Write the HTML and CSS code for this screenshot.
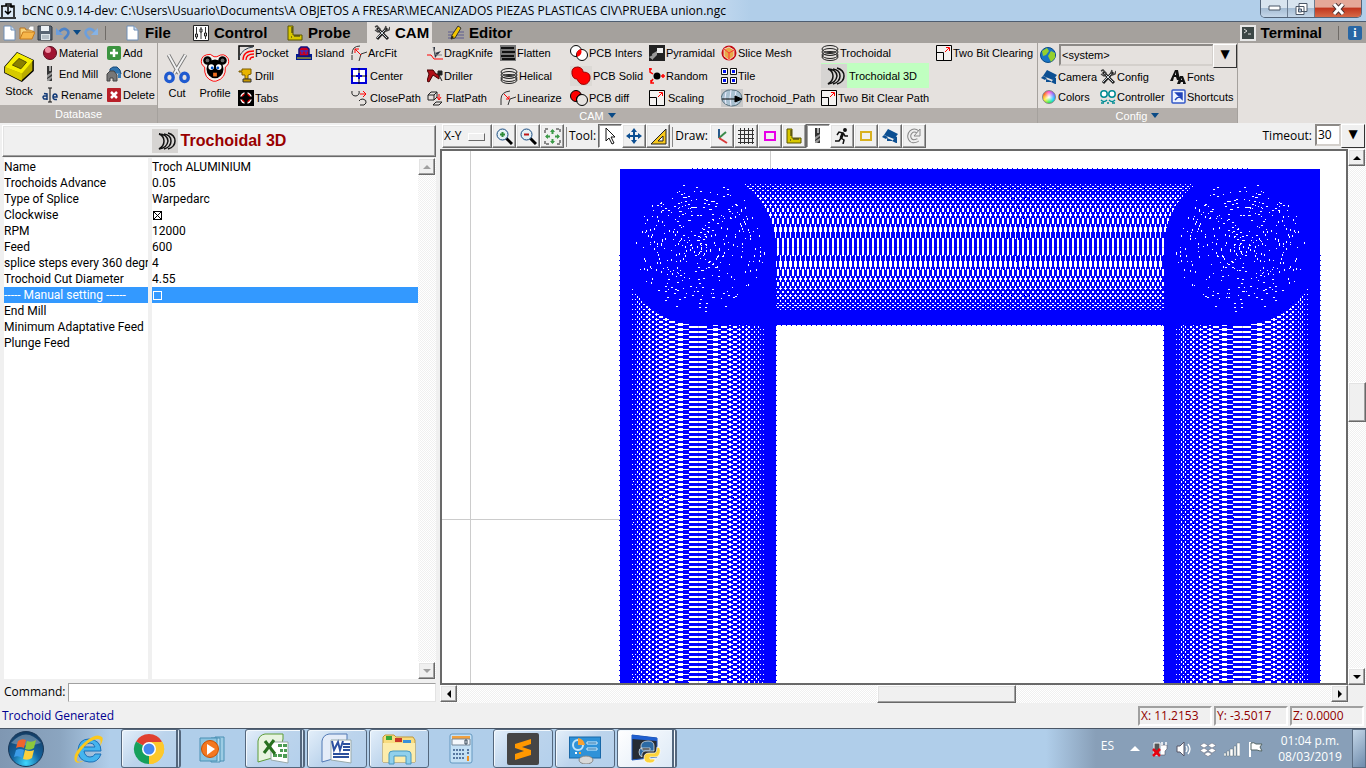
FILE: index.html
```html
<!DOCTYPE html>
<html lang="en">
<head>
  <meta charset="UTF-8" />
  <meta name="viewport" content="width=device-width, initial-scale=1.0"/>
  <title>bCNC 0.9.14-dev</title>
  <link rel="stylesheet" href="styles.css">
</head>
<body>
  <!-- Shared icons -->
  <svg class="sprite" aria-hidden="true">
    <symbol id="i-page" viewBox="0 0 16 16"><path d="M3 1h7l4 4v10H3z" fill="#fff" stroke="#6f8fb8"/><path d="M10 1v4h4" fill="#cfe0f3" stroke="#6f8fb8"/></symbol>
    <symbol id="i-endmill" viewBox="0 0 16 16"><path d="M5 0h5v15H5z" fill="#333"/><path d="M7 0h2v5H7z" fill="#aaa"/><path d="M5 9l5-3v2l-5 4zM5 13l5-3v2l-3 3H5z" fill="#999"/></symbol>
    <symbol id="i-ruler" viewBox="0 0 16 16"><path d="M1 1h5v9h9v5H1z" fill="#d8c800" stroke="#5b5400"/><path d="M4 3h2M4 5h2M4 7h2M8 12v-2M10 12v-2M12 12v-2M4 12h1" stroke="#222"/></symbol>
    <symbol id="i-camera" viewBox="0 0 16 16"><path d="M6 1l10 5-4 5L2 7z" fill="#0c4f92"/><path d="M2 7l-2 2 4 2 2-2zM5 10l5 2v1H5zM13 8l2 1v6h-1l-4-2 2-2z" fill="#0c4f92"/></symbol>
    <symbol id="i-scale" viewBox="0 0 16 16"><path d="M.5.5h15v15H.5zM.5 7.500h7v8" fill="#f4f2f0" stroke="#000"/><path d="M9 7l4-4M10 2.500h3.500V6" fill="none" stroke="#f00"/></symbol>
    <symbol id="i-coil" viewBox="0 0 18 16"><g fill="none" stroke="#222"><ellipse cx="9" cy="4" rx="8" ry="3.500"/><ellipse cx="9" cy="7" rx="8" ry="3.500"/><ellipse cx="9" cy="10" rx="8" ry="3.500"/><ellipse cx="9" cy="12" rx="8" ry="3.500"/></g></symbol>
    <symbol id="i-troch3d" viewBox="0 0 26 24"><path d="M0 0h26v24H0z" fill="#d6d4d2"/><g fill="none" stroke="#111" stroke-width="1.500"><path d="M7 5q8 0 9 7-1 7-9 8 5-3 5-8T7 5"/><path d="M12 5q7 1 7 7t-7 8M16 4q7 2 7 8t-7 8"/></g></symbol>
    <symbol id="i-lens" viewBox="0 0 17 17"><path d="M10 10l6 6" stroke="#000" stroke-width="3"/><circle cx="6.500" cy="6.500" r="5.500" fill="#e5f1f5" stroke="#174a80"/></symbol>
    <symbol id="i-down" viewBox="0 0 8 5"><path d="M0 0h8L4 5z" fill="#0a4a86"/></symbol>
    <symbol id="i-wrench" viewBox="0 0 16 16"><path d="M3 3l11 11" stroke="#222" stroke-width="3"/><path d="M13 3L3 14" stroke="#222" stroke-width="3"/><path d="M4 4l9 9M12 4l-9 9" stroke="#cdd6dd"/><path d="M1 2l2-1 3 3-2 3-3-2M12 1l-1 3 1 2 3-1 1-3" fill="none" stroke="#444" stroke-width="1.500"/></symbol>
  </svg>

  <header class="titlebar">
    <svg class="app-icon" viewBox="0 0 16 16"><path d="M2 14V3h12v11M0 15h16M1 3h5V1h5v3h2M8 4v6M5 8l3 3 3-3" fill="none" stroke="#000" stroke-width="1.500"/></svg>
    <h1 class="title">bCNC 0.9.14-dev: C:\Users\Usuario\Documents\A OBJETOS A FRESAR\MECANIZADOS PIEZAS PLASTICAS CIV\PRUEBA union.ngc</h1>
    <div class="win-buttons">
      <button class="win-btn" aria-label="Minimize"><svg width="13" height="7"><path d="M1 1h11v4H1z" fill="#fff" stroke="#4b5666"/></svg></button>
      <button class="win-btn" aria-label="Restore"><svg width="13" height="12"><path d="M4 .5h8v8H4zM1 3.500h8v8H1z" fill="#fff" stroke="#4b5666"/><path d="M3.500 6h3v3h-3z" fill="#a9bfd6" stroke="#4b5666"/></svg></button>
      <button class="win-btn win-close" aria-label="Close"><svg width="13" height="12"><path d="M2 1l9 10M11 1L2 11" stroke="#4e3434" stroke-width="5"/><path d="M2 1l9 10M11 1L2 11" stroke="#fff" stroke-width="3"/></svg></button>
    </div>
  </header>

  <nav class="tabs">
    <div class="quick">
      <button aria-label="New"><svg class="icon"><use href="#i-page"/></svg></button>
      <button aria-label="Open"><svg class="icon" viewBox="0 0 16 16"><path d="M1 14V3h5l1 2h7v3" fill="#f8d27a" stroke="#b8701c"/><path d="M9 4l2-3h4v5" fill="#fff" stroke="#999"/><path d="M1 14l3-7h12l-3 7z" fill="#f6b64a" stroke="#c57a1c"/></svg></button>
      <button aria-label="Save"><svg class="icon" viewBox="0 0 16 16"><path d="M1 1h13l1 1v13H1z" fill="#596473" stroke="#303943"/><path d="M4 1h8v5H4z" fill="#eef2f6"/><path d="M4 9h9v6H4z" fill="#dfe5ea"/><path d="M5 11h7M5 13h7" stroke="#8c98a4"/></svg></button>
      <button aria-label="Undo"><svg class="icon" viewBox="0 0 16 16"><path d="M4 7q4-5 8-2t-3 9" fill="none" stroke="#4c82c8" stroke-width="2.500"/><path d="M1 3v7h7z" fill="#6d9edc"/></svg></button>
      <button aria-label="Undo list"><svg width="8" height="5"><use href="#i-down"/></svg></button>
      <button aria-label="Redo"><svg class="icon" viewBox="0 0 16 16"><path d="M12 7Q8 2 4 5t3 9" fill="none" stroke="#6c9fdd" stroke-width="2.500"/><path d="M15 3v7H8z" fill="#86b3e6"/></svg></button>
      <span class="divider"></span>
    </div>
    <a href="#" class="tab tab-file"><svg class="icon"><use href="#i-page"/></svg>File</a>
    <a href="#" class="tab tab-control"><svg class="icon" viewBox="0 0 16 16"><path d="M.5.500h15v15H.5z" fill="#fff" stroke="#222"/><path d="M3.500 2v12M8 2v12M12.500 2v12" stroke="#333"/><path d="M2.500 9h2v3h-2zM7 4h2v3H7zM11.500 8h2v3h-2z" fill="#ccc" stroke="#222"/></svg>Control</a>
    <a href="#" class="tab tab-probe"><svg class="icon"><use href="#i-ruler"/></svg>Probe</a>
    <a href="#" class="tab tab-cam active"><svg class="icon"><use href="#i-wrench"/></svg>CAM</a>
    <a href="#" class="tab tab-editor"><svg class="icon" viewBox="0 0 16 16"><path d="M0 7h16M0 10h16M0 13h16" stroke="#5c5c90"/><path d="M10 1l3 2-6 10-4 1 1-4z" fill="#f2c500" stroke="#333"/><path d="M3 14l1-3 2 1z" fill="#111"/></svg>Editor</a>
    <a href="#" class="tab tab-terminal"><svg class="icon" viewBox="0 0 16 16"><path d="M1 1h14v14H1z" fill="#3c4746" stroke="#e8e8e8" stroke-width="2"/><path d="M4 4l3 2-3 2M8 9h3" fill="none" stroke="#ddd"/></svg>Terminal</a>
    <span class="divider"></span>
    <button class="info" aria-label="About">i</button>
  </nav>

  <section class="ribbon">
    <div class="group group-db">
      <div class="group-body">
        <button class="big"><svg class="icon-big" viewBox="0 0 34 34"><path d="M2 18L15 3l17 8v11L20 33 2 24z" fill="#b9ab00" stroke="#000" stroke-width="1.500"/><path d="M2 18L15 3l17 8-12 14z" fill="#f6ee00"/><path d="M10 16l7-7 8 4-6 7z" fill="#8a8000" stroke="#4c4700"/><path d="M20 25v8L2 24v-6z" fill="#d6ca00"/></svg>Stock</button>
        <div class="db-grid">
          <button class="tool"><svg class="icon" viewBox="0 0 16 16"><circle cx="8" cy="8" r="6.500" fill="#a01432" stroke="#5c0c1e"/><circle cx="6" cy="5" r="3" fill="#f08ca0"/></svg>Material</button>
          <button class="tool"><svg class="icon" viewBox="0 0 16 16"><rect x="1" y="1" width="14" height="14" rx="2" fill="#3c9440"/><path d="M8 4v8M4 8h8" stroke="#fff" stroke-width="2.500"/></svg>Add</button>
          <button class="tool"><svg class="icon"><use href="#i-endmill"/></svg>End Mill</button>
          <button class="tool"><svg class="icon" viewBox="0 0 16 16"><path d="M4 7V3l3-2h4l3 3 1 4" fill="#2f73ae" stroke="#174a7a"/><path d="M1 14V8l3-3h4l3 4v6H7v-3H4v3H1z" fill="#777" stroke="#444"/><path d="M12 8h3v4h-3z" fill="#3a80bb"/></svg>Clone</button>
          <button class="tool roomy"><svg class="icon" viewBox="0 0 16 16"><path d="M5 12H2q-2-2 0-3h3v4M5 13V7L2 6.500M11 10h4q0-3-2-3t-2 3q0 3 4 2.500" fill="none" stroke="#123a78" stroke-width="1.500"/><path d="M6 1h4M8 1v14M6 15h4" stroke="#111"/></svg>Rename</button>
          <button class="tool"><svg class="icon" viewBox="0 0 16 16"><rect x="1" y="1" width="14" height="14" rx="1" fill="#b81f28"/><path d="M5 5l6 6M11 5l-6 6" stroke="#fff" stroke-width="2.500"/></svg>Delete</button>
        </div>
      </div>
      <div class="group-label">Database</div>
    </div>

    <div class="group group-cam">
      <div class="group-body">
        <button class="big"><svg class="icon-big" viewBox="0 0 34 34"><path d="M8 3l11 20M26 3L14 23" stroke="#777" stroke-width="4"/><path d="M8 3l11 20M26 3L14 23" stroke="#f2f2f2" stroke-width="2"/><g fill="none" stroke="#1f5ad0" stroke-width="3.500"><ellipse cx="9" cy="27" rx="4" ry="4.500"/><ellipse cx="25" cy="27" rx="4" ry="4.500"/></g></svg>Cut</button>
        <button class="big"><svg class="icon-big" viewBox="0 0 34 34"><path d="M8 3q4-2 8 2h3q8-5 12 2 2 6-3 9 1 12-10 15h-3Q5 28 6 16q-5-3-3-9 1-3 5-4z" fill="#f3efec" stroke="#f00"/><circle cx="9" cy="9" r="4.500"/><circle cx="25" cy="9" r="4.500"/><circle cx="9" cy="9" r="2" fill="#666"/><circle cx="25" cy="9" r="2" fill="#666"/><ellipse cx="17" cy="18" rx="9" ry="10"/><circle cx="13" cy="16" r="3" fill="#fff"/><circle cx="21" cy="16" r="3" fill="#fff"/><circle cx="14" cy="17" r="1.500" fill="#05c"/><circle cx="20" cy="17" r="1.500" fill="#05c"/><path d="M15 22h4v4h-4z" fill="#f07020"/></svg>Profile</button>
        <div class="cam-grid">
          <button class="tool"><svg class="icon" viewBox="0 0 16 16"><path d="M1 15V1h15" fill="none" stroke="#000" stroke-width="1.500"/><path d="M1 12Q5 3 15 2" fill="none" stroke="#345"/><path d="M5 15q0-9 11-9M8 15q0-6 8-6M12 15q0-3 4-3" fill="none" stroke="#f00" stroke-width="1.300"/></svg>Pocket</button>
          <button class="tool"><svg class="icon" viewBox="0 0 16 16"><path d="M1 3h3V1h9v5l-3 1v4H7V7H4V4H1z" fill="#e8b400" stroke="#7a5b00"/><path d="M5 11h8v3H5z" fill="#c89800" stroke="#333"/></svg>Drill</button>
          <button class="tool"><svg class="icon" viewBox="0 0 16 16"><path d="M0 0h16v16H0z"/><circle cx="8" cy="8" r="6" fill="#fff"/><circle cx="8" cy="8" r="4" fill="#000" stroke="#e00" stroke-width="1.500"/><path d="M8 1v4M8 11v4M1 8h4M11 8h4" stroke="#000" stroke-width="3"/></svg>Tabs</button>
          <button class="tool roomy"><svg class="icon" viewBox="0 0 16 16"><path d="M0 9h16v6H0z" fill="#001a90"/><path d="M3 11V4l2-2h6l2 2v7z" fill="#c80020" stroke="#101080" stroke-width="1.500"/><path d="M6 5v4M10 5v4M4 6h8" stroke="#2038e0"/><path d="M1 13h14" stroke="#e0d000"/></svg>Island</button>
          <i></i><i></i>
          <button class="tool"><svg class="icon" viewBox="0 0 16 16"><path d="M1 15V10M16 7l-6 2-2 7M1 9q0-8 8-8" fill="none" stroke="#333"/><path d="M10 10L4 4M4 8V4h4" fill="none" stroke="#f00"/></svg>ArcFit</button>
          <button class="tool roomy"><svg class="icon" viewBox="0 0 16 16"><path d="M1 1h14v14H1z" fill="#fff" stroke="#0000d8" stroke-width="2"/><path d="M0 8h16M8 0v16" stroke="#000"/><path d="M5 8h6M8 5v6" stroke="#0000d8" stroke-width="2"/></svg>Center</button>
          <button class="tool roomy"><svg class="icon" viewBox="0 0 16 16"><path d="M1 1q-1 5 4 5 4-1 3-5M8 11q1-2 4-2 4 1 3 4t-6 2" fill="none" stroke="#222"/><path d="M9 4h6M12 7l3-3-3-3" fill="none" stroke="#f00"/></svg>ClosePath</button>
          <button class="tool"><svg class="icon" viewBox="0 0 16 16"><path d="M0 10h4l3 4h9" fill="none" stroke="#f00"/><path d="M6 2h2v6l6-2-6 7z" fill="#2c3340"/><path d="M6 2l3 8h6" fill="none" stroke="#888"/></svg>DragKnife</button>
          <button class="tool"><svg class="icon" viewBox="0 0 16 16"><path d="M0 2h6l3 4h3v5l-3-2-3-2-4 7-2-1 2-7z" fill="#b01018" stroke="#400"/><path d="M11 3h4v4h-4zM12 7l3 6" fill="#222" stroke="#222"/></svg>Driller</button>
          <button class="tool roomy"><svg class="icon" viewBox="0 0 16 16"><path d="M1 5l3-3h6v5l-3 3H1zM1 5h6v5M7 5l3-3M6 15l3-3h6l-3 3z" fill="none" stroke="#222"/><path d="M12 4v5M10 7l2 3 2-3" fill="none" stroke="#f00"/></svg>FlatPath</button>
          <button class="tool"><svg class="icon" viewBox="0 0 16 16"><path d="M0 0h16v16H0z" fill="#777"/><path d="M1 3h13M2 7h13M1 11h13M2 14h13" stroke="#111" stroke-width="2"/></svg>Flatten</button>
          <button class="tool"><svg class="icon wide"><use href="#i-coil"/></svg>Helical</button>
          <button class="tool"><svg class="icon" viewBox="0 0 16 16"><path d="M1 15V9q0-7 9-8M16 7l-6 2-2 6" fill="none" stroke="#333"/><path d="M4 4l5 5M9 6v3H6" fill="none" stroke="#f00"/></svg>Linearize</button>
          <button class="tool"><svg class="icon wide" viewBox="0 0 18 16"><circle cx="6" cy="6" r="5.500" fill="#fff" stroke="#000"/><circle cx="12" cy="10" r="5.500" fill="#fff" stroke="#000"/><path d="M7 12Q5 6 11 4q2 6-4 8z" fill="#f00"/></svg>PCB Inters</button>
          <button class="tool"><svg class="icon x-wide" viewBox="0 0 22 20"><path d="M0 0h22v20H0z" fill="#dcd9d5"/><path d="M2 8q-1-7 6-7 5 1 5 5 8 0 7 7-2 7-9 5-3-2-4-5-4 0-5-5z" fill="#f00" stroke="#900"/></svg>PCB Solid</button>
          <button class="tool"><svg class="icon wide" viewBox="0 0 18 16"><circle cx="6" cy="6" r="5.500" fill="#f00" stroke="#000"/><circle cx="12" cy="10" r="5.500" fill="#e8e4e1" stroke="#000"/><path d="M7 12Q5 6 11 4" fill="none" stroke="#000"/></svg>PCB diff</button>
          <button class="tool"><svg class="icon" viewBox="0 0 16 16"><path d="M0 0h16v16H0z" fill="#222"/><path d="M8 3h6v5H8z" fill="#eee"/><path d="M3 9l5-3v4l-4 4zM0 12l4-2v5z" fill="#999"/></svg>Pyramidal</button>
          <button class="tool"><svg class="icon" viewBox="0 0 16 16"><circle cx="8" cy="8" r="3.500"/><path d="M0 1h3M1 0v4l3 2M12 8h4M14 6v4M2 12v3h3M4 11l-2 3" fill="none" stroke="#f00" stroke-width="1.500"/></svg>Random</button>
          <button class="tool roomy"><svg class="icon"><use href="#i-scale"/></svg>Scaling</button>
          <button class="tool"><svg class="icon" viewBox="0 0 16 16"><circle cx="8" cy="8" r="7.500" fill="#c40c10"/><path d="M3 4l5-2 5 3v6l-5 4-5-4z" fill="#e8a848" stroke="#fff" stroke-width=".7"/><path d="M3 4l5 4 5-3M8 8v7" stroke="#f33" fill="none"/></svg>Slice Mesh</button>
          <button class="tool"><svg class="icon" viewBox="0 0 16 16"><path d="M.5.500h6v6h-6zM9.500.500h6v6h-6zM.5 9.500h6v6h-6zM9.500 9.500h6v6h-6z" fill="#fff" stroke="#111"/><path d="M2 2h3v3H2zM11 2h3v3h-3zM2 11h3v3H2zM11 11h3v3h-3z" fill="#0010f0"/></svg>Tile</button>
          <button class="tool"><svg class="icon x-wide" viewBox="0 0 22 18"><path d="M0 0h22v18H0z" fill="#c9c9c9"/><path d="M0 9Q2 0 11 1q9 0 10 8-2 8-10 8T0 9" fill="#a8c0d0" stroke="#58707e"/><path d="M5 3q-2 6 0 12M10 1q-2 8 0 16M15 2q-2 7 0 13" fill="none" stroke="#eef"/><path d="M1 10h14M14 7l7 3-7 3z" stroke="#000"/></svg>Trochoid_Path</button>
          <button class="tool"><svg class="icon wide"><use href="#i-coil"/></svg>Trochoidal</button>
          <button class="tool selected"><svg class="icon-troch"><use href="#i-troch3d"/></svg>Trochoidal 3D</button>
          <button class="tool"><svg class="icon"><use href="#i-scale"/></svg>Two Bit Clear Path</button>
          <button class="tool"><svg class="icon"><use href="#i-scale"/></svg>Two Bit Clearing</button>
        </div>
      </div>
      <div class="group-label">CAM <svg width="8" height="5"><use href="#i-down"/></svg></div>
    </div>

    <div class="group group-config">
      <div class="group-body config-body">
        <div class="lang">
          <svg class="icon" viewBox="0 0 16 16"><circle cx="8" cy="8" r="7.500" fill="#1874c4" stroke="#0a4a86"/><path d="M2 4l5-3 2 3-3 4-3 1zM8 9l3-5 4 2v5l-4 4z" fill="#96d02c"/></svg>
          <span class="combo"><select aria-label="Language"><option>&lt;system&gt;</option></select></span>
        </div>
        <div class="config-grid">
          <button class="tool"><svg class="icon"><use href="#i-camera"/></svg>Camera</button>
          <button class="tool"><svg class="icon"><use href="#i-wrench"/></svg>Config</button>
          <button class="tool"><svg class="icon" viewBox="0 0 16 16"><path d="M0 12L5 1h3l2 10H7L6 8H4l-1 4zM7 15l3-8h3l3 8h-3v-2h-2l-1 2z" fill="#111"/><path d="M5 6l1-3v3zM11 11l1-2v2z" fill="#fff"/></svg>Fonts</button>
          <button class="tool"><span class="wheel"></span>Colors</button>
          <button class="tool"><svg class="icon" viewBox="0 0 16 16"><g fill="#fff" stroke="#008c94" stroke-width="1.500"><circle cx="4" cy="5" r="3.200"/><circle cx="12" cy="5" r="3.200"/><path d="M1 11q3 3 6 0M9 11q3 3 6 0M1 14h3M7 14h2M12 14h3"/></g></svg>Controller</button>
          <button class="tool"><svg class="icon" viewBox="0 0 16 16"><rect x="2" y="1" width="13" height="13" rx="1" fill="#eef4ff" stroke="#3458c8" stroke-width="1.500"/><path d="M5 11l5-5M6 4h6v6z" fill="#2244b8" stroke="#2244b8" stroke-width="1.500"/></svg>Shortcuts</button>
        </div>
      </div>
      <div class="group-label">Config <svg width="8" height="5"><use href="#i-down"/></svg></div>
    </div>
  </section>

  <main>
    <aside>
      <button class="panel-title raised"><svg class="icon-troch"><use href="#i-troch3d"/></svg>Trochoidal 3D</button>
      <div class="list">
        <div class="list-body">
          <table class="props">
            <tr><th>Name</th><td>Troch ALUMINIUM</td></tr>
            <tr><th>Trochoids Advance</th><td>0.05</td></tr>
            <tr><th>Type of Splice</th><td>Warpedarc</td></tr>
            <tr><th><label for="clockwise">Clockwise</label></th><td><input type="checkbox" id="clockwise" checked></td></tr>
            <tr><th>RPM</th><td>12000</td></tr>
            <tr><th>Feed</th><td>600</td></tr>
            <tr><th>splice steps every 360 degre</th><td>4</td></tr>
            <tr><th>Trochoid Cut Diameter</th><td>4.55</td></tr>
            <tr class="current"><th><label for="manual">----- Manual setting ------</label></th><td><input type="checkbox" id="manual"></td></tr>
            <tr><th>End Mill</th><td></td></tr>
            <tr><th>Minimum Adaptative Feed</th><td></td></tr>
            <tr><th>Plunge Feed</th><td></td></tr>
          </table>
        </div>
        <div class="scroll scroll-v off">
          <button class="raised" aria-label="Up"><svg width="8" height="4"><path d="M0 4h8L4 0z"/></svg></button>
          <span class="track"></span>
          <button class="raised" aria-label="Down"><svg width="8" height="4"><path d="M0 0h8L4 4z"/></svg></button>
        </div>
      </div>
      <div class="command">
        <label for="command">Command:</label>
        <input type="text" id="command">
      </div>
    </aside>

    <section class="viewer">
      <div class="toolbar">
        <span class="view-select raised"><select aria-label="View"><option>X-Y</option></select></span>
        <button class="tb raised" aria-label="Zoom in"><svg width="17" height="17"><use href="#i-lens"/><path d="M6.500 4v5M4 6.500h5" stroke="#2e8b38" stroke-width="2"/></svg></button>
        <button class="tb raised" aria-label="Zoom out"><svg width="17" height="17"><use href="#i-lens"/><path d="M4 6.500h5" stroke="#c01818" stroke-width="2"/></svg></button>
        <button class="tb raised" aria-label="Fit"><svg width="17" height="17" fill="none"><path d="M1 5V1h4M12 1h4v4M16 12v4h-4M5 16H1v-4" stroke="#222" stroke-dasharray="3 1"/><path d="M8.500 2v4M8.500 11v4M2 8.500h4M11 8.500h4" stroke="#3c9a48" stroke-width="2"/><path d="M6 4l2.500-3L11 4M6 13l2.500 3 2.500-3M4 6L1 8.500 4 11M13 6l3 2.500-3 2.500" fill="#3c9a48"/></svg></button>
        <span class="tb-label">Tool:</span>
        <button class="tb sunken" aria-label="Select"><svg width="16" height="18"><path d="M4 1v13l3-3 3 6 2-1-3-6h4z" fill="#fff" stroke="#111"/></svg></button>
        <button class="tb raised" aria-label="Pan"><svg width="16" height="16"><path d="M8 2v12M2 8h12" stroke="#0c4f92" stroke-width="2"/><path d="M5 4l3-4 3 4zM5 12l3 4 3-4zM4 5L0 8l4 3zM12 5l4 3-4 3z" fill="#0c4f92"/></svg></button>
        <button class="tb raised" aria-label="Measure"><svg width="17" height="17"><path d="M1 16L16 1v15z" fill="#f8c81c" stroke="#222"/><path d="M8 13l5-5v5z" fill="#fff" stroke="#222"/></svg></button>
        <span class="tb-label">Draw:</span>
        <button class="tb raised" aria-label="Axes"><svg width="16" height="17" fill="none" stroke-width="2"><path d="M5 1v9" stroke="#2a5a8c"/><path d="M5 10l7-6" stroke="#3a8a4a"/><path d="M5 10l8 5" stroke="#d83838"/></svg></button>
        <button class="tb raised" aria-label="Grid"><svg width="16" height="16"><path d="M2.500 0v16M6.500 0v16M10.500 0v16M14.500 0v16M0 2.500h16M0 6.500h16M0 10.500h16M0 14.500h16" stroke="#333"/></svg></button>
        <button class="tb raised" aria-label="Margin"><svg width="14" height="11"><path d="M2 1h10v8H2z" fill="none" stroke="#e800e8" stroke-width="2"/></svg></button>
        <button class="tb raised" aria-label="Probe"><svg class="icon"><use href="#i-ruler"/></svg></button>
        <button class="tb sunken" aria-label="End mill"><svg class="icon"><use href="#i-endmill"/></svg></button>
        <button class="tb raised" aria-label="Rapid"><svg width="15" height="16" fill="none" stroke="#111" stroke-width="1.500"><circle cx="11" cy="2" r="1.200" fill="#111"/><path d="M3 7l2-3 4 1-2 5 3 2-1 4M7 10l-2 3H1M9 5l2 3h3"/><path d="M9 5l-2 5" stroke-width="3"/></svg></button>
        <button class="tb raised" aria-label="Workarea"><svg width="14" height="11"><path d="M2 1h10v8H2z" fill="none" stroke="#d8b020" stroke-width="2"/></svg></button>
        <button class="tb raised" aria-label="Camera"><svg class="icon"><use href="#i-camera"/></svg></button>
        <button class="tb raised" aria-label="Refresh"><svg width="16" height="16" fill="none"><path d="M12 4Q8 1 5 4T4 11t8 1" stroke="#888" stroke-width="4"/><path d="M12 4Q8 1 5 4T4 11t8 1" stroke="#eee" stroke-width="2"/><path d="M14 1v7H8z" fill="#eee" stroke="#888"/></svg></button>
        <label class="timeout" for="timeout">Timeout:</label>
        <span class="combo combo-small"><select id="timeout"><option>30</option></select></span>
      </div>

      <div class="plot">
        <svg class="canvas" id="canvas" shape-rendering="crispEdges"></svg>
        <div class="scroll scroll-v">
          <button class="raised" aria-label="Up"><svg width="8" height="4"><path d="M0 4h8L4 0z"/></svg></button>
          <span class="track"><i class="thumb raised"></i></span>
          <button class="raised" aria-label="Down"><svg width="8" height="4"><path d="M0 0h8L4 4z"/></svg></button>
        </div>
        <div class="scroll scroll-h">
          <button class="raised" aria-label="Left"><svg width="4" height="8"><path d="M4 0v8L0 4z"/></svg></button>
          <span class="track"><i class="thumb raised"></i></span>
          <button class="raised" aria-label="Right"><svg width="4" height="8"><path d="M0 0v8l4-4z"/></svg></button>
        </div>
      </div>
    </section>
  </main>

  <footer class="status">
    <span class="message">Trochoid Generated</span>
    <span class="coord">X: 11.2153</span>
    <span class="coord">Y: -3.5017</span>
    <span class="coord">Z: 0.0000</span>
  </footer>

  <div class="taskbar">
    <button class="task task-start" aria-label="Start"><svg width="38" height="38" viewBox="0 0 38 38"><defs><radialGradient id="orb" cx=".5" cy=".9" r=".9"><stop offset="0" stop-color="#40d8ff"/><stop offset=".45" stop-color="#1464a0"/><stop offset="1" stop-color="#143a60"/></radialGradient></defs><circle cx="19" cy="19" r="17.500" fill="url(#orb)" stroke="#1a3858"/><path d="M4 13q15-17 30 0-14 5-30 0" fill="#fff" opacity=".3"/><path d="M11 11q4-3 8-1l-2 8q-4-2-8 0z" fill="#f0642c"/><path d="M20 11q5 2 9-1l-2 8q-4 3-9 1z" fill="#8cc83c"/><path d="M9 20q4-2 8 0l-2 8q-4-3-8-1z" fill="#3c9ce8"/><path d="M18 20q5 2 9 0l-2 8q-4 3-9 1z" fill="#fcd03c"/></svg></button>
    <button class="task" aria-label="Internet Explorer"><svg width="32" height="32" viewBox="0 0 32 32"><path d="M28 18H11q1 6 6 6 4 0 5-3h6q-3 9-12 8Q5 28 5 17 6 6 16 6q12 1 12 12zM11 14h11q-1-4-5-4-5 0-6 4z" fill="#45b4ee" stroke="#1a70b8"/><path d="M2 28Q-1 21 11 10T29 4q2 2-2 9 2-8-3-7-7 1-14 9T4 28q2 2 8-1-8 5-10 1z" fill="#fcc81c"/></svg></button>
    <button class="task open stacked" aria-label="Chrome"><svg width="32" height="32" viewBox="0 0 32 32"><path d="M16 16L3 8.500A15 15 0 0 1 29 8.500z" fill="#e04030"/><path d="M16 16L29 8.500A15 15 0 0 1 16 31z" fill="#fdc82c"/><path d="M16 16v15A15 15 0 0 1 3 8.500z" fill="#16a05c"/><path d="M16 9h13.500A15 15 0 0 1 16 31l7-11z" fill="#fdc82c"/><circle cx="16" cy="16" r="7" fill="#fff"/><circle cx="16" cy="16" r="5.500" fill="#4688f0"/></svg></button>
    <button class="task" aria-label="Media Player"><svg width="32" height="30" viewBox="0 0 32 30"><path d="M18 3h9v24h-9z" fill="#9ccce4" stroke="#4a90b4"/><path d="M14 4h9v24h-9z" fill="#b4dcf0" stroke="#4a90b4"/><path d="M3 4h17v23H3z" fill="#8cc4e0" stroke="#4a90b4"/><circle cx="13" cy="15" r="8.500" fill="#f47820" stroke="#c85000"/><path d="M10 10l8 5-8 6z" fill="#fff"/></svg></button>
    <button class="task open stacked" aria-label="Excel"><svg width="32" height="32" viewBox="0 0 32 32"><path d="M1 29V8q1-6 7-7h18v5l-4 17z" fill="#e8f4e0" stroke="#5c9c38"/><path d="M14 9h17v21l-17-3z" fill="#fff" stroke="#9aa"/><path d="M21 11h4v3h-4zM26 11h4v3h-4zM23 16h3v3h-3zM27 16h3v3h-3zM16 21h4v3h-4zM21 21h4v3h-4zM26 21h4v4h-4z" fill="#4c9c54"/><path d="M8 8l10 13M17 7L7 20" stroke="#287020" stroke-width="3"/></svg></button>
    <button class="task open" aria-label="Word"><svg width="32" height="32" viewBox="0 0 32 32"><path d="M1 29V8q1-6 7-7h18v5l-4 17z" fill="#e4ecf8" stroke="#5078b4"/><path d="M10 7h20v23l-20-3z" fill="#fff" stroke="#9aa"/><path d="M22 11h7M22 14h7M22 17h7M12 21h16M12 24h16" stroke="#2c509c" stroke-width="2"/><path d="M11 8l2 9 4-8 2 8 3-9" fill="none" stroke="#2c50a0" stroke-width="2"/></svg></button>
    <button class="task open" aria-label="Explorer"><svg width="34" height="32" viewBox="0 0 34 32"><path d="M1 4l2-2h9l2 2h17l2 3v22H1z" fill="#f8dc80" stroke="#c09838"/><path d="M4 3h6v4H4z" fill="#38a838"/><path d="M13 5h7v4h-7z" fill="#c83828"/><path d="M21 7h8v4h-8z" fill="#3890d8"/><path d="M1 10h32v19H1z" fill="#fcecab"/><path d="M7 31V21q0-3 4-3h14q4 0 4 3v10h-5v-8H12v8z" fill="#90d0ec" stroke="#4898c0"/></svg></button>
    <button class="task" aria-label="Calculator"><svg width="24" height="32" viewBox="0 0 24 32"><rect x="1" y="1" width="22" height="29" rx="2" fill="#c4e0f4" stroke="#6498c0"/><path d="M3 3h18v3H3z" fill="#f0a040"/><path d="M3 6h18v6H3z" fill="#f4f8fc" stroke="#789"/><path d="M16 7h2v4h-2z" fill="none" stroke="#345"/><path d="M4 17h12M4 21h12M4 25h12" stroke="#5878a0" stroke-width="2" stroke-dasharray="2 1"/><path d="M19 16v6" stroke="#5878a0" stroke-width="2" stroke-dasharray="2 1"/><path d="M19 23v5" stroke="#f09020" stroke-width="2"/></svg></button>
    <button class="task open" aria-label="Sublime Text"><svg width="32" height="32" viewBox="0 0 32 32"><rect width="32" height="32" rx="2" fill="#454545"/><path d="M8 11l16-5v5l-9 3 9 3v5L8 27v-6l9-3-9-3z" fill="#ff9800"/></svg></button>
    <button class="task open" aria-label="Control Panel"><svg width="32" height="30" viewBox="0 0 32 30"><rect x=".5" y="3" width="31" height="21" fill="#2f92d8" stroke="#1868a8"/><circle cx="9" cy="11" r="5" fill="none" stroke="#bfe4fa" stroke-width="2"/><path d="M9 11V4q6 1 7 7z" fill="#f8a030"/><path d="M18 8h10v2H18zM18 14h10v2H18z" fill="#0a60a0" stroke="#d8f0ff"/><path d="M6 19h2" stroke="#fff" stroke-width="2"/><path d="M10 19h2" stroke="#f8a030" stroke-width="2"/><ellipse cx="17" cy="26" rx="7" ry="4" fill="#d8d8d8" stroke="#888"/></svg></button>
    <button class="task open stacked current-task" aria-label="Python"><svg width="32" height="32" viewBox="0 0 32 32"><path d="M3 2l25 3v19L3 27z" fill="#262c34" stroke="#1c54b8"/><path d="M3 2l25 3v3L3 6z" fill="#2060d0"/><path d="M13 17h8v-2h-9q-1-7 7-7 6 0 6 5v5h-9q-4 1-3 6-3-1-3-5 0-4 3-4z" fill="#2c6aa4" stroke="#eee" stroke-width=".7"/><path d="M28 14q4 0 3 6-1 4-4 4h-6v2h5q0 4-5 4-6 0-6-5 0-5 5-5h6q2-1 2-6z" fill="#fcd43c" stroke="#fff" stroke-width=".7"/></svg></button>
    <div class="tray">
      <span class="tray-lang">ES</span>
      <svg class="tray-up" width="10" height="5"><path d="M0 5h10L5 0z" fill="#fff"/></svg>
      <svg width="16" height="16" viewBox="0 0 16 16"><path d="M2 2h6v12H2z" fill="#555" stroke="#fff"/><path d="M9 4h6v4l-2 2v4H9" fill="#fff" stroke="#556" stroke-width=".6"/><path d="M10 1v3M14 1v3" stroke="#fff" stroke-width="1.500"/><path d="M1 8l7 7M8 8l-7 7" stroke="#e80010" stroke-width="2.500"/></svg>
      <svg width="16" height="16" viewBox="0 0 16 16"><path d="M1 5h3l4-4v14l-4-4H1z" fill="#fff" stroke="#556"/><path d="M10 5q2 3 0 6M12 3q4 5 0 10" fill="none" stroke="#fff" stroke-width="1.300"/></svg>
      <svg width="16" height="16" viewBox="0 0 16 16"><path d="M4 2l4 2.500L4 7 0 4.500zM12 2l4 2.500L12 7 8 4.500zM4 7l4 2.500L4 12 0 9.500zM12 7l4 2.500-4 2.500-4-2.500zM8 11l4 2-4 2.500L4 13z" fill="#fff" stroke="#667" stroke-width=".5"/></svg>
      <svg width="16" height="16" viewBox="0 0 16 16"><path d="M0 12h2v3H0zM3 10h2v5H3zM6 8h3v7H6zM10 5h2v10h-2zM13 2h3v13h-3z" fill="#fff" stroke="#566" stroke-width=".4"/></svg>
      <svg width="16" height="16" viewBox="0 0 16 16"><path d="M2 1v15" stroke="#fff" stroke-width="2"/><path d="M3 2q3-1 5 1h6l-2 3 2 4q-3 0-5-1H3z" fill="#fff" stroke="#566"/></svg>
      <span class="clock">01:04 p.m.<br>08/03/2019</span>
      <button class="show-desktop" aria-label="Show desktop"></button>
    </div>
  </div>

  <script src="script.js"></script>
</body>
</html>
```
FILE: styles.css
```css
* { box-sizing: border-box; }
body { margin: 0; height: 100vh; display: flex; flex-direction: column; overflow: hidden; background: #f0f0f0; color: #000; font: 12px/16px "Open Sans", "Noto Sans", sans-serif; }
button, input, select { font: inherit; color: inherit; }
button { padding: 0; border: 0; background: none; display: flex; align-items: center; white-space: nowrap; }
svg { flex: none; display: block; }
.sprite { position: absolute; width: 0; height: 0; }
.icon { width: 16px; height: 16px; }
.wide { width: 18px; }
.x-wide { width: 22px; height: 20px; }
.icon-big { width: 32px; height: 32px; }
.icon-troch { width: 26px; height: 24px; }
.raised { background: #f0f0f0; border: 1px solid; border-color: #fff #696969 #696969 #fff; box-shadow: inset -1px -1px #a0a0a0, inset 1px 1px #e3e3e3; }
.sunken { background: #fff; border: 1px solid; border-color: #696969 #fff #fff #696969; box-shadow: inset 1px 1px #a0a0a0; }

/* Title bar */
.titlebar { height: 22px; flex: none; display: flex; align-items: center; gap: 6px; background: linear-gradient(90deg, #dce9f6, #d3e3f4 680px, #b1cee9 750px); border-bottom: 1px solid #4e5d70; }
.app-icon { width: 16px; height: 16px; }
.title { flex: 1; margin: 0; font-size: 12px; font-weight: normal; white-space: nowrap; }
.win-buttons { display: flex; align-self: flex-start; height: 18px; margin-right: 4px; border: 1px solid #536479; border-top: 0; border-radius: 0 0 5px 5px; overflow: hidden; }
.win-btn { width: 27px; justify-content: center; background: linear-gradient(#d8e4ef 45%, #a6bdd4 50%, #c4d6e8); border-right: 1px solid #6b7c90; }
.win-close { width: 46px; border-right: 0; background: linear-gradient(#e5a898 40%, #c23820 50%, #d66a48); }

/* Tabs */
.tabs { height: 21px; flex: none; display: flex; background: #a5a19d; }
.quick { width: 120px; display: flex; align-items: center; gap: 2px; padding-left: 1px; }
.divider { width: 1px; height: 14px; align-self: center; background: #6f6b67; }
.quick .divider { margin-left: 4px; }
.tab { display: flex; align-items: center; gap: 5px; color: #000; text-decoration: none; font: bold 15px/20px "Liberation Sans", Arial, sans-serif; }
.tab-file { width: 73px; padding-left: 4px; }
.tab-control { width: 94px; }
.tab-probe { width: 80px; }
.tab-cam { width: 65px; padding-left: 7px; }
.tab-editor { padding-left: 16px; }
.tab-terminal { margin-left: auto; padding-right: 16px; }
.active { background: #e5e1de; }
.info { width: 14px; height: 14px; margin: 4px 4px 0 9px; justify-content: center; background: #2866a4; color: #fff; font: bold 12px/14px "Liberation Serif", serif; border-radius: 2px; }

/* Ribbon */
.ribbon { height: 80px; flex: none; display: flex; background: #e5e1de; font: 11px/14px "Liberation Sans", Arial, sans-serif; }
.group { display: flex; flex-direction: column; border-right: 1px solid #a5a19d; }
.group-body { flex: 1; display: flex; }
.group-label { height: 15px; background: #b4afab; color: #fff; display: flex; align-items: center; justify-content: center; gap: 4px; }
.group-db { width: 158px; }
.group-db .group-label { height: 18px; }
.group-cam { width: 880px; }
.group-config { width: 200px; }
.big { width: 38px; flex-direction: column; justify-content: center; gap: 2px; }
.tool { height: 20px; gap: 1px; }
.roomy { gap: 3px; }
.selected { height: 25px; width: 108px; gap: 2px; background: #c0ffc0; }
.db-grid { display: grid; grid-template-columns: 64px 50px; align-content: space-around; margin-left: 4px; }
.cam-grid { display: grid; grid-auto-flow: column; grid-template-rows: 20px 25px 20px; grid-template-columns: 58px 55px 76px 73px 70px 79px 72px 100px 115px 100px; align-items: center; margin-left: 4px; }
.config-body { flex-direction: column; }
.lang { display: flex; align-items: center; gap: 3px; height: 24px; padding-left: 2px; }
.config-grid { display: grid; grid-template-columns: 59px 70px 66px; padding-left: 3px; }
.wheel { width: 14px; height: 14px; margin: 0 1px; border-radius: 50%; border: 1px solid #888; background: radial-gradient(#fff, transparent 70%), conic-gradient(#f4c, #66f, #0cf, #2e4, #fe2, #f60, #f4c); }
.combo { position: relative; width: 178px; height: 22px; }
.combo select { appearance: none; width: 155px; height: 22px; padding: 0 1px; border: 2px solid #a0a0a0; border-color: #8c8986 #d4d0cc #d4d0cc #8c8986; background: #e5e1de; border-radius: 0; }
.combo::after { content: "▼"; position: absolute; right: 0; top: 0; width: 22px; height: 22px; text-align: center; font: 12px/19px "DejaVu Sans", sans-serif; background: #e5e1de; border: 1px solid; border-color: #fff #333 #333 #fff; pointer-events: none; }

/* Parameter list */
main { flex: 1; min-height: 0; display: flex; }
aside { width: 440px; flex: none; display: flex; flex-direction: column; padding: 2px 4px 0 2px; }
.panel-title { height: 32px; flex: none; justify-content: center; gap: 3px; color: #900; font: bold 16px/20px "Liberation Sans", Arial, sans-serif; }
.list { flex: 1; min-height: 0; display: flex; margin: 1px 0 3px 2px; }
.list-body { flex: 1; min-width: 0; padding-top: 1px; overflow: hidden; background: linear-gradient(90deg, #fff 144px, #f0f0f0 144px 148px, #fff 148px); }
.props { width: 100%; table-layout: fixed; border-collapse: separate; border-spacing: 0; font-family: Roboto, "Open Sans", sans-serif; }
.props th, .props td { height: 16px; padding: 0; text-align: left; font-weight: normal; line-height: 16px; white-space: nowrap; overflow: hidden; }
.props th { width: 148px; border-right: 4px solid #f0f0f0; }
.props .current th, .props .current td { background-color: #3399ff; color: #fff; }
.props input { display: block; appearance: none; width: 9px; height: 9px; margin: 0 1px; border: 1px solid; }
.props input:checked { background: linear-gradient(45deg, transparent 44%, #000 44% 56%, transparent 56%), linear-gradient(-45deg, transparent 44%, #000 44% 56%, transparent 56%); }
.command { display: flex; align-items: center; gap: 2px; height: 20px; margin: 0 0 1px 2px; }
.command input { flex: 1; height: 19px; border: 1px solid; border-color: #a0a0a0 #e3e3e3 #e3e3e3 #a0a0a0; }

/* Scrollbars */
.scroll { display: flex; background: conic-gradient(#fff 25%, #f0f0f0 0 50%, #fff 0 75%, #f0f0f0 0) 0 0/2px 2px; }
.scroll button { width: 17px; height: 17px; flex: none; justify-content: center; }
.scroll-v { flex-direction: column; width: 18px; }
.scroll-h { height: 18px; }
.off { fill: #a0a0a0; }
.track { flex: 1; min-width: 0; min-height: 0; display: flex; }
.scroll-v .track { flex-direction: column; }
.scroll-v .track::before { content: ""; height: 43%; }
.scroll-v .thumb { height: 8%; }
.scroll-h .track::before { content: ""; width: 48%; }
.scroll-h .thumb { width: 16%; }

/* Drawing area */
.viewer { flex: 1; min-width: 0; display: flex; flex-direction: column; }
.toolbar { height: 26px; flex: none; display: flex; align-items: flex-start; padding: 1px 1px 0 2px; }
.tb { width: 24px; height: 24px; justify-content: center; }
.view-select { position: relative; width: 50px; height: 24px; }
.view-select select { appearance: none; width: 46px; height: 22px; padding: 0 1px; border: 0; background: none; }
.view-select::after { content: ""; position: absolute; right: 6px; top: 8px; width: 15px; height: 6px; border: 1px solid; border-color: #fff #696969 #696969 #fff; pointer-events: none; }
.tb-label { height: 20px; margin: 3px 2px 0; padding: 1px 0 0 2px; border-left: 1px solid #888; }
.timeout { margin: 4px 3px 0 auto; }
.combo-small { width: 50px; height: 23px; }
.combo-small select { width: 26px; background: #fff; }
.combo-small::after { background: #f0f0f0; }
.plot { flex: 1; min-height: 0; display: grid; grid-template: minmax(0, 1fr) 18px / minmax(0, 1fr) 18px; }
.canvas { width: 100%; height: 100%; background: #fff; border: 2px solid #696969; }

/* Status bar */
.status { height: 25px; flex: none; display: flex; align-items: center; gap: 2px; padding: 1px 2px 0; }
.message { flex: 1; color: #000090; }
.coord { width: 74px; height: 20px; padding-left: 1px; border: 2px solid; border-color: #a0a0a0 #fff #fff #a0a0a0; color: #900000; }

/* Taskbar */
.taskbar { height: 40px; flex: none; display: flex; gap: 2px; border-top: 1px solid #4a5666; background: linear-gradient(90deg, #7f97b2, #8ba5c0 60px, #b0ceea 110px calc(100% - 320px), #889fb8 calc(100% - 270px)); }
.task { width: 60px; justify-content: center; border-radius: 3px; }
.task-start { width: 57px; padding-right: 6px; }
.open { border: 1px solid #54677d; background: linear-gradient(135deg, #e4effa, #bcd4ec 50%, #b4d0ec); box-shadow: inset 1px 1px #f2f8fd; }
.stacked { border-right: 5px double #54677d; }
.current-task { background: linear-gradient(135deg, #fff, #dce9f6); }
.tray { margin-left: auto; display: flex; align-items: center; gap: 8px; color: #fff; }
.tray-lang { margin-bottom: 5px; }
.tray-up { margin: 0 4px 0 8px; }
.clock { width: 76px; margin-right: -4px; text-align: center; }
.show-desktop { width: 14px; height: 39px; border: 1px solid #5b6e84; background: linear-gradient(135deg, #c4d6e8, #6f8cac); }
```
FILE: script.js
```js
// Toolpath preview: trochoids along the top edge and down both sides
const NS = 'http://www.w3.org/2000/svg';
const canvas = document.getElementById('canvas');
const BLUE = '#0000ff';
const R = 77;      // trochoid radius
const STEP = 5;    // advance
const LEFT = 256, RIGHT = 800, TOP = 96, END = 1600;

function addPath(d, attrs) {
  const el = document.createElementNS(NS, 'path');
  el.setAttribute('d', d);
  for (const k in attrs) el.setAttribute(k, attrs[k]);
  canvas.appendChild(el);
}

function circle(x, y) {
  return `M${x - R} ${y}a${R} ${R} 0 1 0 ${2 * R} 0a${R} ${R} 0 1 0 ${-2 * R} 0`;
}

// grid and centre lines
addPath('M28.5 0V1600M328.5 0V18M0 368.5H178M256.5 96V1600M800.5 96V1600M256 96.500H800', { stroke: '#cccccc' });

let d = '';
for (let x = LEFT; x <= RIGHT; x += STEP) d += circle(x, TOP);
for (let y = TOP; y <= END; y += STEP) d += circle(LEFT, y) + circle(RIGHT, y);
addPath(d, { fill: 'none', stroke: BLUE, 'stroke-width': 2 });

// both walls of each slot close up where the turns bunch together
addPath('M178 25H878M334 167H722', { stroke: BLUE, 'stroke-width': 14 });
addPath('M184 18V1600M328 168V1600M728 168V1600M872 18V1600', { stroke: BLUE, 'stroke-width': 12 });
addPath('M250 17.500H806M334 174.500H722M177.500 104V1600M334.500 174V1600M721.500 174V1600M878.500 104V1600', { fill: 'none', stroke: BLUE, 'stroke-dasharray': '1 4' });

// corners are cut several times over
addPath('M178 18H256A78 78 0 0 1 334 96V174H256A78 78 0 0 1 178 96Z', { fill: BLUE });
addPath('M878 18H800A78 78 0 0 0 722 96V174H800A78 78 0 0 0 878 96Z', { fill: BLUE });

// uncut specks left inside the corners, strung along the turns
let seed = 7;
function rnd() {
  seed = (seed * 16807) % 2147483647;
  return seed / 2147483647;
}
let specks = '';
for (let i = 0; i < 430; i++) {
  const a = rnd() * Math.PI * 2;
  const r = 4 * Math.round(16 * Math.pow(rnd(), 0.7));
  const x = Math.round(r * Math.cos(a)) - 6 + Math.round(r / 8);
  const y = Math.round(r * Math.sin(a));
  const long = rnd() > 0.5 ? 2 : 1;
  const w = Math.abs(y) > Math.abs(x) ? long : 1;
  const h = w === 1 ? long : 1;
  specks += `M${LEFT + x} ${TOP + y}h${w}v${h}h${-w}z`;
  specks += `M${RIGHT - x} ${TOP + y}h${w}v${h}h${-w}z`;
}
addPath(specks, { fill: '#ffffff' });
```
